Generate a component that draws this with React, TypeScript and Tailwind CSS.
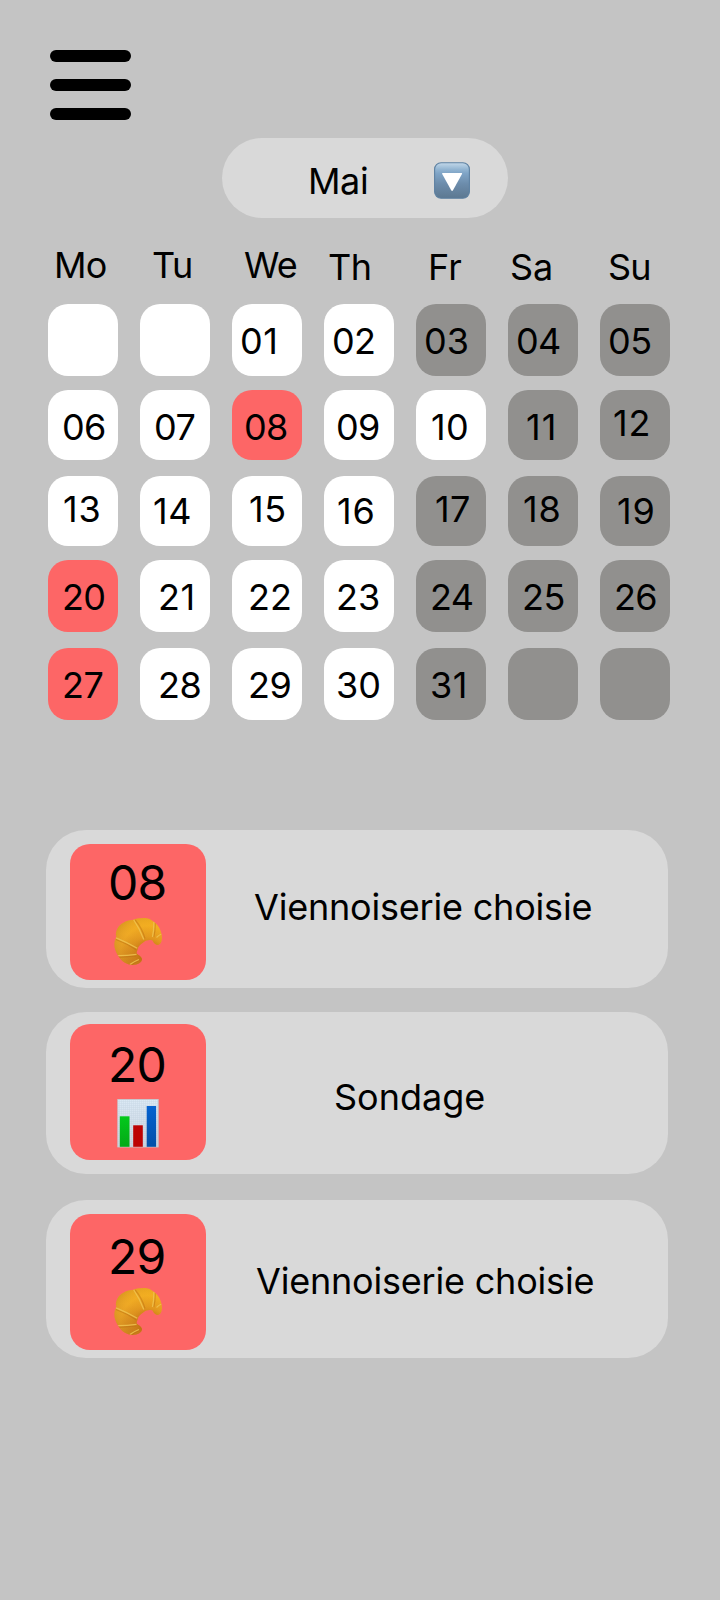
import React from "react";

type Tone = "white" | "gray" | "red";
type Day = [label: string, tone: Tone, offset: string];

const tones: Record<Tone, string> = {
  white: "bg-white",
  gray: "bg-[#91908e]",
  red: "bg-[#fd6666]",
};

const weekdays: [string, string][] = [
  ["Mo", "pl-[6px] tracking-[-0.8px]"],
  ["Tu", "pl-[12px] tracking-[-0.5px]"],
  ["We", "pl-[12px] tracking-[-1px]"],
  ["Th", "pl-[4px] pt-[2px] tracking-[-0.5px]"],
  ["Fr", "pl-[12px] pt-[2px]"],
  ["Sa", "pl-[2px] pt-[2px]"],
  ["Su", "pl-[8px] pt-[2px] tracking-[-0.8px]"],
];

const weeks: { row: string; days: Day[] }[] = [
  {
    row: "h-[72px]",
    days: [
      ["", "white", ""],
      ["", "white", ""],
      ["01", "white", "pl-[8px] pt-[15px] tracking-[0.6px]"],
      ["02", "white", "pl-[8px] pt-[15px] tracking-[-0.7px]"],
      ["03", "gray", "pl-[8px] pt-[15px]"],
      ["04", "gray", "pl-[8px] pt-[15px] tracking-[-0.7px]"],
      ["05", "gray", "pl-[8px] pt-[15px] tracking-[-0.5px]"],
    ],
  },
  {
    row: "mt-[14px] h-[70px]",
    days: [
      ["06", "white", "pl-[14px] pt-[15px] tracking-[-0.7px]"],
      ["07", "white", "pl-[14px] pt-[15px] tracking-[-0.5px]"],
      ["08", "red", "pl-[12px] pt-[15px] tracking-[-0.7px]"],
      ["09", "white", "pl-[12px] pt-[15px] tracking-[-0.7px]"],
      ["10", "white", "pl-[15px] pt-[15px] tracking-[0.3px]"],
      ["11", "gray", "pl-[18px] pt-[15px] tracking-[1.2px]"],
      ["12", "gray", "pl-[13px] pt-[11px] tracking-[0.8px]"],
    ],
  },
  {
    row: "mt-[16px] h-[70px]",
    days: [
      ["13", "white", "pl-[15px] pt-[11px] tracking-[0.8px]"],
      ["14", "white", "pl-[13px] pt-[13px] tracking-[0.5px]"],
      ["15", "white", "pl-[17px] pt-[11px] tracking-[0.5px]"],
      ["16", "white", "pl-[13px] pt-[13px] tracking-[0.8px]"],
      ["17", "gray", "pl-[19px] pt-[11px] tracking-[0.3px]"],
      ["18", "gray", "pl-[15px] pt-[11px] tracking-[0.8px]"],
      ["19", "gray", "pl-[17px] pt-[13px] tracking-[0.8px]"],
    ],
  },
  {
    row: "mt-[14px] h-[72px]",
    days: [
      ["20", "red", "pl-[14px] pt-[15px] tracking-[-0.7px]"],
      ["21", "white", "pl-[18px] pt-[15px] tracking-[0.6px]"],
      ["22", "white", "pl-[16px] pt-[15px]"],
      ["23", "white", "pl-[12px] pt-[15px]"],
      ["24", "gray", "pl-[14px] pt-[15px] tracking-[-0.7px]"],
      ["25", "gray", "pl-[14px] pt-[15px] tracking-[-0.4px]"],
      ["26", "gray", "pl-[14px] pt-[15px] tracking-[-0.7px]"],
    ],
  },
  {
    row: "mt-[16px] h-[72px]",
    days: [
      ["27", "red", "pl-[14px] pt-[15px] tracking-[-0.5px]"],
      ["28", "white", "pl-[18px] pt-[15px] tracking-[-0.5px]"],
      ["29", "white", "pl-[16px] pt-[15px] tracking-[-0.4px]"],
      ["30", "white", "pl-[12px] pt-[15px]"],
      ["31", "gray", "pl-[14px] pt-[15px] tracking-[0.6px]"],
      ["", "gray", ""],
      ["", "gray", ""],
    ],
  },
];

function DropdownIcon() {
  return (
    <svg className="mt-[24px] ml-auto mr-[38px] h-[37px] w-[36px]" viewBox="0 0 36 37">
      <defs>
        <linearGradient id="dd" x1="0" y1="0" x2="0" y2="1">
          <stop offset="0" stopColor="#c3d8e9" />
          <stop offset="0.2" stopColor="#8fb2d0" />
          <stop offset="0.3" stopColor="#7fa4c6" />
          <stop offset="0.6" stopColor="#6c8cab" />
          <stop offset="1" stopColor="#5c7891" />
        </linearGradient>
      </defs>
      <rect x="0.6" y="0.8" width="34.8" height="35.4" rx="6.5" fill="url(#dd)" stroke="#5d81a2" strokeWidth="1.1" />
      <path d="M8.6 11H27.6Q28.4 11 28 11.9L19 28.3Q18.1 29.9 17.2 28.3L8.2 11.9Q7.8 11 8.6 11Z" fill="#fff" />
    </svg>
  );
}

function Croissant({ id }: { id: string }) {
  const body =
    "M47.9 19C48.2 23 46.6 26.8 43.5 27C41.3 27 39.5 25 38.6 22.6C35 21.4 32 22.6 29.5 24.2C26.5 26.4 24.4 28 23.8 30.5C23.5 32.5 22.2 34 22.8 35.8C25 37.2 28 39.2 28 41.3C27.8 44 25 46.2 21 46.8C15 47.6 9 44.8 5.4 39.5C2.2 35 .2 30.5 .4 26C.5 23 1.4 20.8 2.5 18.5C1.2 16.6 2 13.6 3.5 10.5C6 5.8 12 2.4 18.8 2C22 .8 26 .1 31 .1C34.5 .4 37 1.6 39.2 3.6C43.5 6 47.5 12 47.9 19Z";
  return (
    <svg className="ml-[44px] h-[48px] w-[49px]" viewBox="0 0 49 48">
      <defs>
        <linearGradient id={id + "g"} x1="0.6" y1="0" x2="0.4" y2="1">
          <stop offset="0" stopColor="#f2ac1a" />
          <stop offset="0.4" stopColor="#eaa222" />
          <stop offset="0.7" stopColor="#d98f20" />
          <stop offset="1" stopColor="#c3781a" />
        </linearGradient>
        <radialGradient id={id + "r"} gradientUnits="userSpaceOnUse" cx="34" cy="35" r="42">
          <stop offset="0.2" stopColor="#b8650c" stopOpacity="0.6" />
          <stop offset="0.4" stopColor="#d08018" stopOpacity="0.25" />
          <stop offset="0.65" stopColor="#f8b92c" stopOpacity="0.3" />
          <stop offset="1" stopColor="#c28220" stopOpacity="0.6" />
        </radialGradient>
        <clipPath id={id + "c"}>
          <path d={body} />
        </clipPath>
      </defs>
      <path d={body} fill={`url(#${id}g)`} />
      <path d={body} fill={`url(#${id}r)`} />
      <g clipPath={`url(#${id}c)`} fill="none">
        <path d="M2 21.5Q13 25.5 22 31.8M4 39.4Q13 39 22 38M21.2 2Q28 10 31 20.5M41.2 5Q41.4 13 39.8 19M18 47Q21 44 26 42" stroke="#b56c12" strokeWidth="1.2" opacity="0.45" />
        <path d="M2 19.8Q12 23.8 23.3 30.2M4 37.7Q13 37.6 22.5 36.4M19.5 1.5Q25.3 10 29.8 21.5M39.9 3.5Q39.9 12 38.5 19M15.8 46.5Q20 43.5 25 41.5M42.5 19.5Q45 17 47.5 16" stroke="#eec250" strokeWidth="1.3" opacity="0.85" />
      </g>
    </svg>
  );
}

function ChartIcon() {
  return (
    <svg className="ml-[47px] h-[50px] w-[42px]" viewBox="0 0 42 50">
      <defs>
        <linearGradient id="paper" x1="0" y1="0" x2="0" y2="1">
          <stop offset="0" stopColor="#dceaf6" />
          <stop offset="1" stopColor="#cdd4e0" />
        </linearGradient>
        <linearGradient id="green" x1="0" y1="0" x2="0" y2="1">
          <stop offset="0" stopColor="#03c91c" />
          <stop offset="1" stopColor="#04a916" />
        </linearGradient>
        <linearGradient id="blue" x1="0" y1="0" x2="0" y2="1">
          <stop offset="0" stopColor="#0562d0" />
          <stop offset="1" stopColor="#0350a8" />
        </linearGradient>
        <pattern id="mesh" width="2" height="2" patternUnits="userSpaceOnUse">
          <path d="M0 .5H2M.5 0V2" stroke="#b4c5d4" strokeWidth="0.5" opacity="0.45" />
        </pattern>
      </defs>
      <rect x="0.8" y="0.5" width="40.4" height="47.5" fill="url(#paper)" />
      <rect x="0.8" y="0.5" width="40.4" height="47.5" fill="url(#mesh)" stroke="#c3cad0" strokeWidth="0.8" />
      <rect x="2.8" y="17.3" width="9.7" height="30.5" fill="url(#green)" />
      <rect x="16.2" y="26.3" width="9.6" height="21.5" fill="#bd0203" />
      <rect x="29.7" y="7" width="9.4" height="40.8" fill="url(#blue)" />
    </svg>
  );
}

interface EventProps {
  day: string;
  title: string;
  card: string;
  tile: string;
  gap: string;
  text: string;
  children: React.ReactNode;
}

function EventCard({ day, title, card, tile, gap, text, children }: EventProps) {
  return (
    <article className={`flex w-[622px] items-start rounded-[40px] bg-[#d9d9d9] pl-[24px] ${card}`}>
      <div className={`h-[136px] w-[136px] shrink-0 rounded-[20px] bg-[#fd6666] ${tile}`}>
        <div className="pl-[38px] text-[48px] leading-[58px] tracking-[-0.8px]">{day}</div>
        <div className={gap}>{children}</div>
      </div>
      <h2 className={`whitespace-nowrap ${text}`}>{title}</h2>
    </article>
  );
}

export default function App() {
  return (
    <main className="flex h-[1600px] w-[720px] flex-col items-start overflow-hidden bg-[#c4c4c4] font-['Inter',sans-serif] text-[36px] leading-[44px] text-black">
      <button aria-label="Menu" className="mt-[50px] ml-[49.5px] flex w-[81px] flex-col gap-[17px]">
        <span className="h-[12px] w-full rounded-full bg-black" />
        <span className="h-[12px] w-full rounded-full bg-black" />
        <span className="h-[12px] w-full rounded-full bg-black" />
      </button>

      <button className="mt-[18px] ml-[222px] flex h-[80px] w-[286px] items-start rounded-[40px] bg-[#d9d9d9]">
        <span className="pt-[21px] pl-[86px] tracking-[-0.4px]">Mai</span>
        <DropdownIcon />
      </button>

      <div className="mt-[25px] ml-[48px] grid h-[61px] grid-cols-[repeat(7,70px)] gap-x-[22px]">
        {weekdays.map(([name, offset]) => (
          <span key={name} className={offset}>
            {name}
          </span>
        ))}
      </div>

      <section className="ml-[48px]">
        {weeks.map(({ row, days }, w) => (
          <div key={w} className={`grid grid-cols-[repeat(7,70px)] gap-x-[22px] ${row}`}>
            {days.map(([label, tone, offset], d) => (
              <div key={d} className={`rounded-[20px] ${tones[tone]} ${offset}`}>
                {label}
              </div>
            ))}
          </div>
        ))}
      </section>

      <section className="mt-[110px] ml-[46px] flex flex-col">
        <EventCard day="08" title="Viennoiserie choisie" card="h-[158px] pt-[14px]" tile="pt-[10px]" gap="pt-[6px]" text="pt-[41px] pl-[48px] tracking-[-0.2px]">
          <Croissant id="a" />
        </EventCard>
        <EventCard day="20" title="Sondage" card="mt-[24px] h-[162px] pt-[12px]" tile="pt-[12px]" gap="pt-[5px]" text="pt-[51px] pl-[128px]">
          <ChartIcon />
        </EventCard>
        <EventCard day="29" title="Viennoiserie choisie" card="mt-[26px] h-[158px] pt-[14px]" tile="pt-[14px]" gap="pt-[2px]" text="pt-[45px] pl-[50px] tracking-[-0.2px]">
          <Croissant id="b" />
        </EventCard>
      </section>
    </main>
  );
}
